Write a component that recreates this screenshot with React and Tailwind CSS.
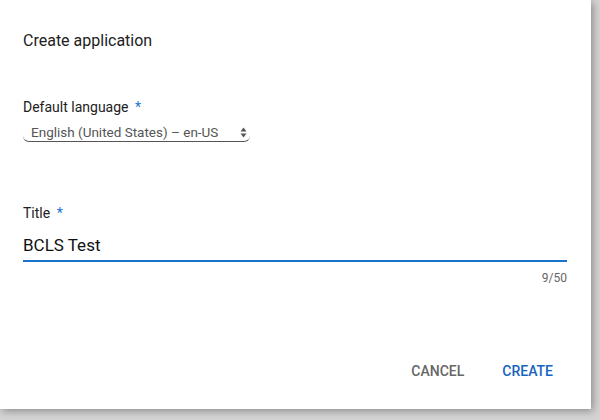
import React, { useState } from 'react';

const App = () => {
  const [title, setTitle] = useState('BCLS Test');

  return (
    <div className="w-[600px] h-[420px] bg-[#d4d4d4] overflow-hidden" style={{ fontFamily: 'Roboto, "Liberation Sans", sans-serif' }}>
      <div className="w-[591px] h-[409px] bg-white shadow-[2px_2px_8px_rgba(0,0,0,0.35)] flex flex-col px-[23px]">
        {/* header */}
        <div className="pt-[31px] text-[16px] leading-[20px] text-[#212121]">Create application</div>

        {/* language select */}
        <div className="mt-[47px]">
          <div className="text-[14px] leading-[18px] text-[#212121]">
            Default language <span className="text-[#1976d2] ml-[3px]">*</span>
          </div>
          <div className="relative mt-[6px] w-[227px] h-[20px] border-b border-[#555] rounded-b-[6px] flex items-center">
            <span className="pl-[8px] text-[13.5px] leading-[18px] text-[#555]">English (United States) – en-US</span>
            <svg className="absolute right-[3px] top-[5px]" width="7" height="11" viewBox="0 0 7 11">
              <path d="M3.5 0.5 L6.5 4.5 H0.5 Z" fill="#555" />
              <path d="M3.5 10.5 L6.5 6.5 H0.5 Z" fill="#555" />
            </svg>
          </div>
        </div>

        {/* title input */}
        <div className="mt-[62px]">
          <div className="text-[14px] leading-[18px] text-[#212121]">
            Title <span className="text-[#1976d2] ml-[3px]">*</span>
          </div>
          <input
            value={title}
            onChange={(e) => setTitle(e.target.value)}
            className="mt-[10px] w-[544px] h-[30px] pb-[2px] text-[17px] leading-[22px] text-[#111] outline-none border-b-2 border-[#1a73c8] bg-transparent"
          />
          <div className="w-[544px] mt-[9px] text-right text-[12px] leading-[14px] text-[#666]">{title.length}/50</div>
        </div>

        {/* actions */}
        <div className="mt-auto mb-[27px] flex justify-end gap-[38px] pr-[15px] text-[14px] font-medium">
          <button className="text-[#666]">CANCEL</button>
          <button className="text-[#1565c0]">CREATE</button>
        </div>
      </div>
    </div>
  );
};

export default App;
